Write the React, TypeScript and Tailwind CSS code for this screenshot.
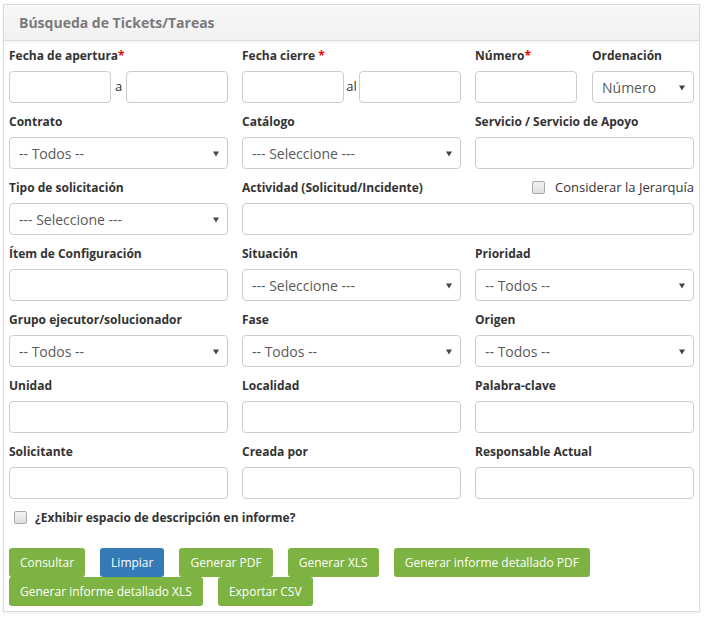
import React from "react";

const Label = ({ children, req }: { children: React.ReactNode; req?: "tight" | "space" }) => (
  <div className="text-[12px] font-bold text-[#333] leading-[17px] mb-[7px] whitespace-nowrap">
    {children}
    {req === "tight" && <span className="text-[#e00]">*</span>}
    {req === "space" && <span className="text-[#e00]"> *</span>}
  </div>
);

const Input = ({ className = "" }: { className?: string }) => (
  <div className={`h-[32px] border border-[#ccc] rounded-[4px] bg-white ${className}`} />
);

const Select = ({ text }: { text: string }) => (
  <div className="h-[32px] border border-[#ccc] rounded-[4px] bg-white flex items-center pl-[9px] pr-[8px] text-[14px] text-[#5a5a5a]">
    <span className="flex-1">{text}</span>
    <svg width="6" height="6" viewBox="0 0 6 6" className="mt-[1px]">
      <polygon points="0,0.5 6,0.5 3,5.5" fill="#444" />
    </svg>
  </div>
);

const Check = () => (
  <span className="inline-block w-[13px] h-[13px] rounded-[2px] border border-[#a9a9a9] bg-gradient-to-b from-[#f4f4f4] to-[#dedede]" />
);

const Btn = ({ children, blue }: { children: React.ReactNode; blue?: boolean }) => (
  <div
    className={`h-[29px] px-[11px] flex items-center rounded-[3px] text-[12px] text-white ${
      blue ? "bg-[#337ab7]" : "bg-[#7cb342]"
    }`}
  >
    {children}
  </div>
);

export default function App() {
  return (
    <div className="bg-white w-[704px] h-[618px] pt-[4px] pl-[3px]" style={{ fontFamily: '"Open Sans", sans-serif' }}>
      <div className="w-[697px] border border-[#ddd] bg-white shadow-[0_1px_2px_rgba(0,0,0,0.08)]">
        <div className="h-[36px] bg-gradient-to-b from-[#f8f8f8] to-[#f1f1f1] border-b border-[#ddd] flex items-center pl-[15px] shadow-[0_2px_3px_rgba(0,0,0,0.04)]">
          <span className="text-[14px] font-bold text-[#7a7a7a]">Búsqueda de Tickets/Tareas</span>
        </div>
        <div className="px-[5px] pt-[6px] pb-[5px]">
          <div className="grid grid-cols-[219px_219px_219px] gap-x-[14px] gap-y-[10px]">
            {/* Row 1 */}
            <div>
              <Label req="tight">Fecha de apertura</Label>
              <div className="grid grid-cols-[102px_15px_102px]">
                <Input />
                <span className="text-[13px] text-[#333] flex items-center justify-center">a</span>
                <Input />
              </div>
            </div>
            <div>
              <Label req="space">Fecha cierre</Label>
              <div className="grid grid-cols-[102px_15px_102px]">
                <Input />
                <span className="text-[13px] text-[#333] flex items-center justify-center">al</span>
                <Input />
              </div>
            </div>
            <div className="grid grid-cols-[102px_102px] gap-x-[15px]">
              <div>
                <Label req="tight">Número</Label>
                <Input />
              </div>
              <div>
                <Label>Ordenación</Label>
                <Select text="Número" />
              </div>
            </div>
            {/* Row 2 */}
            <div>
              <Label>Contrato</Label>
              <Select text="-- Todos --" />
            </div>
            <div>
              <Label>Catálogo</Label>
              <Select text="--- Seleccione ---" />
            </div>
            <div>
              <Label>Servicio / Servicio de Apoyo</Label>
              <Input />
            </div>
            {/* Row 3 */}
            <div>
              <Label>Tipo de solicitación</Label>
              <Select text="--- Seleccione ---" />
            </div>
            <div className="col-span-2">
              <div className="flex items-start justify-between">
                <Label>Actividad (Solicitud/Incidente)</Label>
                <div className="flex items-center gap-[10px] h-[17px] text-[13px] text-[#333]">
                  <Check />
                  <span>Considerar la Jerarquía</span>
                </div>
              </div>
              <Input />
            </div>
            {/* Row 4 */}
            <div>
              <Label>Ítem de Configuración</Label>
              <Input />
            </div>
            <div>
              <Label>Situación</Label>
              <Select text="--- Seleccione ---" />
            </div>
            <div>
              <Label>Prioridad</Label>
              <Select text="-- Todos --" />
            </div>
            {/* Row 5 */}
            <div>
              <Label>Grupo ejecutor/solucionador</Label>
              <Select text="-- Todos --" />
            </div>
            <div>
              <Label>Fase</Label>
              <Select text="-- Todos --" />
            </div>
            <div>
              <Label>Origen</Label>
              <Select text="-- Todos --" />
            </div>
            {/* Row 6 */}
            <div>
              <Label>Unidad</Label>
              <Input />
            </div>
            <div>
              <Label>Localidad</Label>
              <Input />
            </div>
            <div>
              <Label>Palabra-clave</Label>
              <Input />
            </div>
            {/* Row 7 */}
            <div>
              <Label>Solicitante</Label>
              <Input />
            </div>
            <div>
              <Label>Creada por</Label>
              <Input />
            </div>
            <div>
              <Label>Responsable Actual</Label>
              <Input />
            </div>
          </div>
          <div className="flex items-center gap-[8px] pl-[5px] mt-[10px] h-[17px]">
            <Check />
            <span className="text-[12px] font-bold text-[#333]">¿Exhibir espacio de descripción en informe?</span>
          </div>
          <div className="flex flex-wrap gap-x-[15px] mt-[22px]">
            <Btn>Consultar</Btn>
            <Btn blue>Limpiar</Btn>
            <Btn>Generar PDF</Btn>
            <Btn>Generar XLS</Btn>
            <Btn>Generar informe detallado PDF</Btn>
            <Btn>Generar informe detallado XLS</Btn>
            <Btn>Exportar CSV</Btn>
          </div>
        </div>
      </div>
    </div>
  );
}
